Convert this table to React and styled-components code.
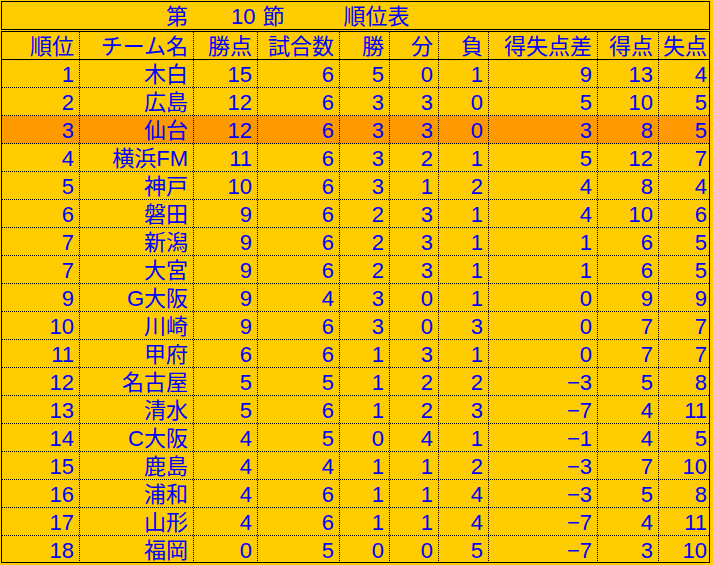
import styled, { createGlobalStyle } from "styled-components";

const GlobalStyle = createGlobalStyle`
  html, body {
    margin: 0;
    padding: 0;
    background: #ffcc00;
  }
  body {
    font-family: "Liberation Sans", "Noto Sans CJK JP", sans-serif;
  }
`;

const COLS = "78px 114px 64px 82px 50px 49px 50px 109px 61px 51px";

const Page = styled.div`
  width: 713px;
  height: 565px;
  box-sizing: border-box;
  padding: 1px 3px 0 1px;
  background: #ffcc00;
  color: #0000ff;
  font-size: 22px;
`;

const TitleBar = styled.div`
  height: 29px;
  box-sizing: border-box;
  border: 1px solid #000;
  display: flex;
  align-items: flex-start;
  padding: 2px 0 0 164px;
  line-height: 26px;
`;

const TitlePart = styled.span`
  margin-left: ${(p) => p.$gap || 0}px;
  white-space: nowrap;
`;

const Table = styled.div`
  margin-top: 1px;
  border: 1px solid #000;
`;

const Row = styled.div`
  display: grid;
  grid-template-columns: ${COLS};
  height: 28px;
  box-sizing: border-box;
  border-bottom: 1px ${(p) => (p.$head ? "solid" : "dotted")} #000;
  background: ${(p) => (p.$hot ? "#ff9900" : "#ffcc00")};

  &:last-child {
    border-bottom: none;
    height: 26px;
  }
`;

const Cell = styled.div`
  box-sizing: border-box;
  border-right: 1px dotted #000;
  padding: 2px ${(p) => (p.$tight ? 3 : 5)}px 0 0;
  text-align: right;
  line-height: 25px;
  white-space: nowrap;

  &:last-child {
    border-right: none;
  }
`;

const HEAD = ["順位", "チーム名", "勝点", "試合数", "勝", "分", "負", "得失点差", "得点", "失点"];

const ROWS = [
  ["1", "木白", 15, 6, 5, 0, 1, "9", 13, 4],
  ["2", "広島", 12, 6, 3, 3, 0, "5", 10, 5],
  ["3", "仙台", 12, 6, 3, 3, 0, "3", 8, 5],
  ["4", "横浜FM", 11, 6, 3, 2, 1, "5", 12, 7],
  ["5", "神戸", 10, 6, 3, 1, 2, "4", 8, 4],
  ["6", "磐田", 9, 6, 2, 3, 1, "4", 10, 6],
  ["7", "新潟", 9, 6, 2, 3, 1, "1", 6, 5],
  ["7", "大宮", 9, 6, 2, 3, 1, "1", 6, 5],
  ["9", "G大阪", 9, 4, 3, 0, 1, "0", 9, 9],
  ["10", "川崎", 9, 6, 3, 0, 3, "0", 7, 7],
  ["11", "甲府", 6, 6, 1, 3, 1, "0", 7, 7],
  ["12", "名古屋", 5, 5, 1, 2, 2, "−3", 5, 8],
  ["13", "清水", 5, 6, 1, 2, 3, "−7", 4, 11],
  ["14", "C大阪", 4, 5, 0, 4, 1, "−1", 4, 5],
  ["15", "鹿島", 4, 4, 1, 1, 2, "−3", 7, 10],
  ["16", "浦和", 4, 6, 1, 1, 4, "−3", 5, 8],
  ["17", "山形", 4, 6, 1, 1, 4, "−7", 4, 11],
  ["18", "福岡", 0, 5, 0, 0, 5, "−7", 3, 10],
];

export default function App() {
  return (
    <Page>
      <GlobalStyle />
      <TitleBar>
        <TitlePart>第</TitlePart>
        <TitlePart $gap={43}>10</TitlePart>
        <TitlePart $gap={7}>節</TitlePart>
        <TitlePart $gap={59}>順位表</TitlePart>
      </TitleBar>
      <Table>
        <Row $head>
          {HEAD.map((h, i) => (
            <Cell key={h} $tight={i === 9}>
              {h}
            </Cell>
          ))}
        </Row>
        {ROWS.map((r) => (
          <Row key={r[1]} $hot={r[1] === "仙台"}>
            {r.map((v, i) => (
              <Cell key={i} $tight={i === 9}>
                {v}
              </Cell>
            ))}
          </Row>
        ))}
      </Table>
    </Page>
  );
}
